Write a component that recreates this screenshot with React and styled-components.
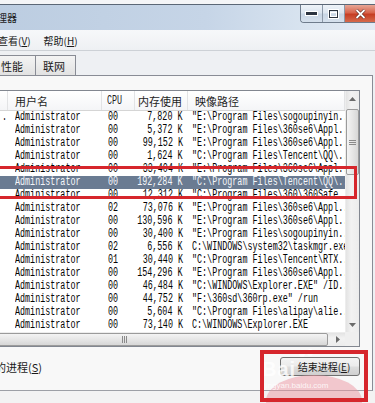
import React from 'react';
import styled, { createGlobalStyle } from 'styled-components';

const Global = createGlobalStyle`
  html, body { margin: 0; padding: 0; background: #f0f0f0; }
  body {
    width: 375px; height: 403px; overflow: hidden;
    font-family: "Noto Sans CJK SC", "Liberation Sans", sans-serif;
  }
  * { box-sizing: border-box; }
`;

const Window = styled.div`
  position: relative;
  width: 375px;
  height: 403px;
  overflow: hidden;
  display: flex;
  flex-direction: column;
  background: #eef0f3;
`;

const TopGap = styled.div`
  height: 4px;
  background: #f4f5f7;
`;

const TitleBar = styled.div`
  height: 26px;
  border-top: 1px solid #5b6776;
  background: linear-gradient(to right, #bccde1 0%, #c6d5e7 55%, #d9e4f0 82%, #e4ebf4 100%);
  display: flex;
  justify-content: space-between;
`;

const TitleText = styled.div`
  align-self: center;
  margin-left: -33px;
  font-size: 10px;
  color: #1c1c1c;
  white-space: nowrap;
`;

const Controls = styled.div`
  display: flex;
  height: 18px;
  border: 1px solid #6f7c8c;
  border-top: none;
  border-right: none;
  border-radius: 0 0 0 4px;
  overflow: hidden;
`;

const CtlBtn = styled.div`
  width: ${p => p.$w}px;
  height: 100%;
  display: flex;
  align-items: center;
  justify-content: center;
  border-right: 1px solid #8d99a8;
  background: linear-gradient(#eef3f8 0%, #dde6f0 45%, #c9d6e5 55%, #d6e1ed 100%);
`;

const CloseBtn = styled.div`
  width: 30px;
  height: 100%;
  display: flex;
  align-items: center;
  justify-content: center;
  background: linear-gradient(#e7a696 0%, #d8654d 45%, #c63e24 55%, #d66a4c 100%);
`;

const MenuBar = styled.div`
  height: 21px;
  display: flex;
  align-items: center;
  gap: 13px;
  background: linear-gradient(#f7f8fa, #eef0f3);
  border-bottom: 1px solid #cdd1d6;
  font-size: 10px;
  color: #1a1a1a;
`;

const MenuItem = styled.span`
  white-space: nowrap;
  margin-left: ${p => p.$ml || 0}px;
`;

const TabStrip = styled.div`
  height: 24px;
  display: flex;
  align-items: flex-end;
  margin-right: 2px;
`;

const Tab = styled.div`
  height: 20px;
  width: ${p => p.$w}px;
  margin-left: ${p => p.$ml || 0}px;
  padding-left: 7px;
  display: flex;
  align-items: center;
  border: 1px solid #898c95;
  border-bottom: none;
  border-left-width: ${p => (p.$noLeft ? 0 : 1)}px;
  background: linear-gradient(#f4f4f4, #e2e2e2);
  font-size: 11px;
  color: #1a1a1a;
`;

const Panel = styled.div`
  height: 316px;
  margin-right: 2px;
  border-top: 1px solid #898c95;
  border-right: 1px solid #898c95;
  border-bottom: 1px solid #9da0a6;
  background: #f8f8f8;
  padding-top: 14px;
  display: flex;
  flex-direction: column;
`;

const ListBox = styled.div`
  width: 360px;
  display: grid;
  grid-template-columns: 345px 14px;
  grid-template-rows: 241px 14px;
  border: 1px solid #828790;
  border-left: none;
  background: #fff;
`;

const ListView = styled.div`
  overflow: hidden;
  display: flex;
  flex-direction: column;
`;

const COLS = '8px 94px 33px 53px 157px';

const HeaderRow = styled.div`
  display: grid;
  grid-template-columns: ${COLS};
  height: 20px;
  border-bottom: 1px solid #d5d5d5;
  background: linear-gradient(#ffffff, #f4f5f7);
`;

const HeadCell = styled.div`
  display: flex;
  align-items: center;
  justify-content: ${p => (p.$right ? 'flex-end' : 'flex-start')};
  padding-left: ${p => p.$pl || 0}px;
  padding-right: ${p => p.$pr || 0}px;
  padding-top: 1px;
  border-right: 1px solid #e2e3e5;
  font-size: 11px;
  color: #1e1e1e;
  overflow: hidden;
  white-space: nowrap;
`;

const Row = styled.div`
  display: grid;
  grid-template-columns: ${COLS};
  height: 13px;
  background: ${p => (p.$sel ? '#6a7b92' : 'transparent')};
  color: ${p => (p.$sel ? '#f4f6f9' : '#050505')};
`;

const Cell = styled.div`
  display: flex;
  align-items: center;
  justify-content: ${p => (p.$right ? 'flex-end' : 'flex-start')};
  padding-left: ${p => p.$pl || 0}px;
  padding-right: ${p => p.$pr || 0}px;
  overflow: hidden;
`;

const Mono = styled.span`
  display: inline-block;
  flex-shrink: 0;
  font-family: "Liberation Mono", "DejaVu Sans Mono", monospace;
  font-size: 12.5px;
  line-height: 13px;
  white-space: pre;
  transform: scaleX(0.672);
  transform-origin: ${p => (p.$right ? 'right' : 'left')} center;
`;

const VScroll = styled.div`
  display: flex;
  flex-direction: column;
  background: linear-gradient(to right, #e3e3e3, #f2f2f2 40%, #ececec);
  border-left: 1px solid #ededed;
`;

const ArrowBtn = styled.div`
  width: ${p => (p.$h ? 14 : 13)}px;
  height: ${p => (p.$h ? 13 : 15)}px;
  flex-shrink: 0;
  display: flex;
  align-items: center;
  justify-content: center;
`;

const VThumb = styled.div`
  height: 66px;
  margin-top: 3px;
  border: 1px solid #9b9b9b;
  border-radius: 2px;
  background: linear-gradient(to right, #f4f4f4, #e6e6e6 50%, #d7d7d7);
  display: flex;
  align-items: center;
  justify-content: center;
`;

const Spacer = styled.div`
  flex: 1;
`;

const HScroll = styled.div`
  display: flex;
  align-items: stretch;
  gap: 3px;
  background: linear-gradient(#e3e3e3, #f2f2f2 40%, #ececec);
  border-top: 1px solid #ededed;
`;

const HThumb = styled.div`
  flex: 1;
  margin-left: -80px;
  border: 1px solid #9b9b9b;
  border-radius: 2px;
  background: linear-gradient(#f4f4f4, #e6e6e6 50%, #d7d7d7);
  display: flex;
  align-items: center;
  justify-content: center;
`;

const Corner = styled.div`
  background: #efefef;
`;

const Footer = styled.div`
  margin-top: 10px;
  height: 19px;
  padding-right: 12px;
  display: flex;
  align-items: center;
  justify-content: space-between;
`;

const CheckLabel = styled.span`
  margin-left: -71px;
  font-size: 11px;
  color: #1a1a1a;
  white-space: nowrap;
`;

const Button = styled.div`
  width: 80px;
  height: 19px;
  border: 1px solid #707070;
  border-radius: 3px;
  background: linear-gradient(#f3f3f3 0%, #ebebeb 48%, #dddddd 52%, #cfcfcf 100%);
  display: flex;
  align-items: center;
  justify-content: center;
  padding-left: 8px;
  font-size: 10px;
  color: #1a1a1a;
  white-space: nowrap;
`;

const StatusBar = styled.div`
  flex: 1;
  background: #f3f3f3;
`;

const Mark = styled.div`
  position: absolute;
  left: ${p => p.$x}px;
  top: ${p => p.$y}px;
  width: ${p => p.$w}px;
  height: ${p => p.$h}px;
  border: ${p => p.$t}px solid #d6262c;
  pointer-events: none;
`;

const Watermark = styled.div`
  position: absolute;
  left: 262px;
  top: 349px;
  width: 104px;
  height: 54px;
  pointer-events: none;
`;

const Blob = styled.div`
  position: absolute;
  left: 4px;
  top: 26px;
  width: 96px;
  height: 52px;
  border-radius: 50%;
  background: rgba(236, 150, 162, 0.5);
`;

const Paw = styled.div`
  position: absolute;
  top: ${p => p.$y}px;
  left: ${p => p.$x}px;
  width: 6px;
  height: 7px;
  border-radius: 50%;
  background: rgba(255, 255, 255, 0.8);
`;

const WmBig = styled.div`
  position: absolute;
  left: 0;
  top: 9px;
  font-family: "Liberation Sans", sans-serif;
  font-weight: bold;
  font-size: 20px;
  letter-spacing: 1px;
  color: rgba(255, 255, 255, 0.8);
`;

const WmSmall = styled.div`
  position: absolute;
  left: 2px;
  top: 32px;
  font-family: "Liberation Sans", sans-serif;
  font-size: 8px;
  color: rgba(255, 255, 255, 0.85);
  white-space: nowrap;
`;

const rows = [
  ['00', '7,820 K', '"E:\\Program Files\\sogoupinyin..'],
  ['00', '5,372 K', '"E:\\Program Files\\360se6\\Appl..'],
  ['00', '99,152 K', '"E:\\Program Files\\360se6\\Appl..'],
  ['00', '1,624 K', '"C:\\Program Files\\Tencent\\QQ\\..'],
  ['00', '33,404 K', '"E:\\Program Files\\360se6\\Appl..'],
  ['00', '192,284 K', '"C:\\Program Files\\Tencent\\QQ\\..'],
  ['00', '12,312 K', '"C:\\Program Files\\360\\360Safe..'],
  ['02', '73,076 K', '"E:\\Program Files\\360se6\\Appl..'],
  ['00', '130,596 K', '"E:\\Program Files\\360se6\\Appl..'],
  ['00', '30,400 K', '"E:\\Program Files\\sogoupinyin..'],
  ['02', '6,556 K', 'C:\\WINDOWS\\system32\\taskmgr.exe'],
  ['01', '30,440 K', '"C:\\Program Files\\Tencent\\RTX..'],
  ['00', '154,296 K', '"E:\\Program Files\\360se6\\Appl..'],
  ['00', '46,484 K', '"C:\\WINDOWS\\Explorer.EXE" /ID..'],
  ['00', '44,752 K', '"F:\\360sd\\360rp.exe" /run'],
  ['00', '5,604 K', '"C:\\Program Files\\alipay\\alie..'],
  ['00', '73,140 K', 'C:\\WINDOWS\\Explorer.EXE'],
];

const Tri = ({ dir }) => {
  const pts = {
    up: '0,4 3.5,0 7,4',
    down: '0,0 3.5,4 7,0',
    right: '0,0 4,3.5 0,7',
  }[dir];
  const w = dir === 'right' ? 4 : 7;
  const h = dir === 'right' ? 7 : 4;
  return (
    <svg width={w} height={h} viewBox={`0 0 ${w} ${h}`}>
      <polygon points={pts} fill="#6b6b6b" />
    </svg>
  );
};

const GripV = () => (
  <svg width="7" height="7" viewBox="0 0 7 7">
    <path d="M0 1.5H7M0 3.5H7M0 5.5H7" stroke="#8a8a8a" strokeWidth="1" />
  </svg>
);

const GripH = () => (
  <svg width="7" height="7" viewBox="0 0 7 7">
    <path d="M1.5 0V7M3.5 0V7M5.5 0V7" stroke="#8a8a8a" strokeWidth="1" />
  </svg>
);

export default function App() {
  return (
    <>
      <Global />
      <Window>
        <TopGap />
        <TitleBar>
          <TitleText>任务管理器</TitleText>
          <Controls>
            <CtlBtn $w={22}>
              <svg width="13" height="5" viewBox="0 0 13 5">
                <rect x="0.5" y="0.5" width="12" height="4" fill="#2c3440" stroke="#fff" strokeWidth="1" />
              </svg>
            </CtlBtn>
            <CtlBtn $w={22}>
              <svg width="11" height="10" viewBox="0 0 11 10">
                <rect x="0.5" y="0.5" width="10" height="9" fill="none" stroke="#fff" strokeWidth="1" />
                <rect x="1.5" y="1.5" width="8" height="7" fill="none" stroke="#2c3440" strokeWidth="1" />
                <rect x="2.5" y="3.5" width="6" height="4" fill="none" stroke="#fff" strokeWidth="1" />
              </svg>
            </CtlBtn>
            <CloseBtn>
              <svg width="11" height="10" viewBox="0 0 11 10">
                <path d="M1.5 1L9.5 9M9.5 1L1.5 9" stroke="#4a1a12" strokeWidth="3" />
                <path d="M1.5 1L9.5 9M9.5 1L1.5 9" stroke="#fff" strokeWidth="1.8" />
              </svg>
            </CloseBtn>
          </Controls>
        </TitleBar>

        <MenuBar>
          <MenuItem $ml={-2}>查看(<u>V</u>)</MenuItem>
          <MenuItem>帮助(<u>H</u>)</MenuItem>
        </MenuBar>

        <TabStrip>
          <Tab $w={43} $ml={-7}>性能</Tab>
          <Tab $w={40} $noLeft>联网</Tab>
        </TabStrip>

        <Panel>
          <ListBox>
            <ListView>
              <HeaderRow>
                <HeadCell />
                <HeadCell $pl={7}>用户名</HeadCell>
                <HeadCell $pl={5}><Mono>CPU</Mono></HeadCell>
                <HeadCell $right $pr={5}>内存使用</HeadCell>
                <HeadCell $pl={7}>映像路径</HeadCell>
              </HeaderRow>
              {rows.map((r, i) => (
                <Row key={i} $sel={i === 5}>
                  <Cell $pl={2}>{i === 0 ? <Mono>.</Mono> : null}</Cell>
                  <Cell $pl={7}><Mono>Administrator</Mono></Cell>
                  <Cell $pl={6}><Mono>{r[0]}</Mono></Cell>
                  <Cell $right $pr={5}><Mono $right>{r[1]}</Mono></Cell>
                  <Cell $pl={4}><Mono>{r[2]}</Mono></Cell>
                </Row>
              ))}
            </ListView>
            <VScroll>
              <ArrowBtn><Tri dir="up" /></ArrowBtn>
              <VThumb><GripV /></VThumb>
              <Spacer />
              <ArrowBtn><Tri dir="down" /></ArrowBtn>
            </VScroll>
            <HScroll>
              <HThumb><GripH /></HThumb>
              <ArrowBtn $h><Tri dir="right" /></ArrowBtn>
            </HScroll>
            <Corner />
          </ListBox>

          <Footer>
            <CheckLabel>显示所有用户的进程(<u>S</u>)</CheckLabel>
            <Button>结束进程(<u>E</u>)</Button>
          </Footer>
        </Panel>
        <StatusBar />

        <Mark $x={-6} $y={166} $w={363} $h={33} $t={3} />
        <Watermark>
          <Blob />
          <Paw $x={37} $y={1} />
          <Paw $x={45} $y={0} />
          <WmBig>Bai</WmBig>
          <WmSmall>jingyan.baidu.com</WmSmall>
        </Watermark>
        <Mark $x={260} $y={350} $w={108} $h={52} $t={4} />
      </Window>
    </>
  );
}
